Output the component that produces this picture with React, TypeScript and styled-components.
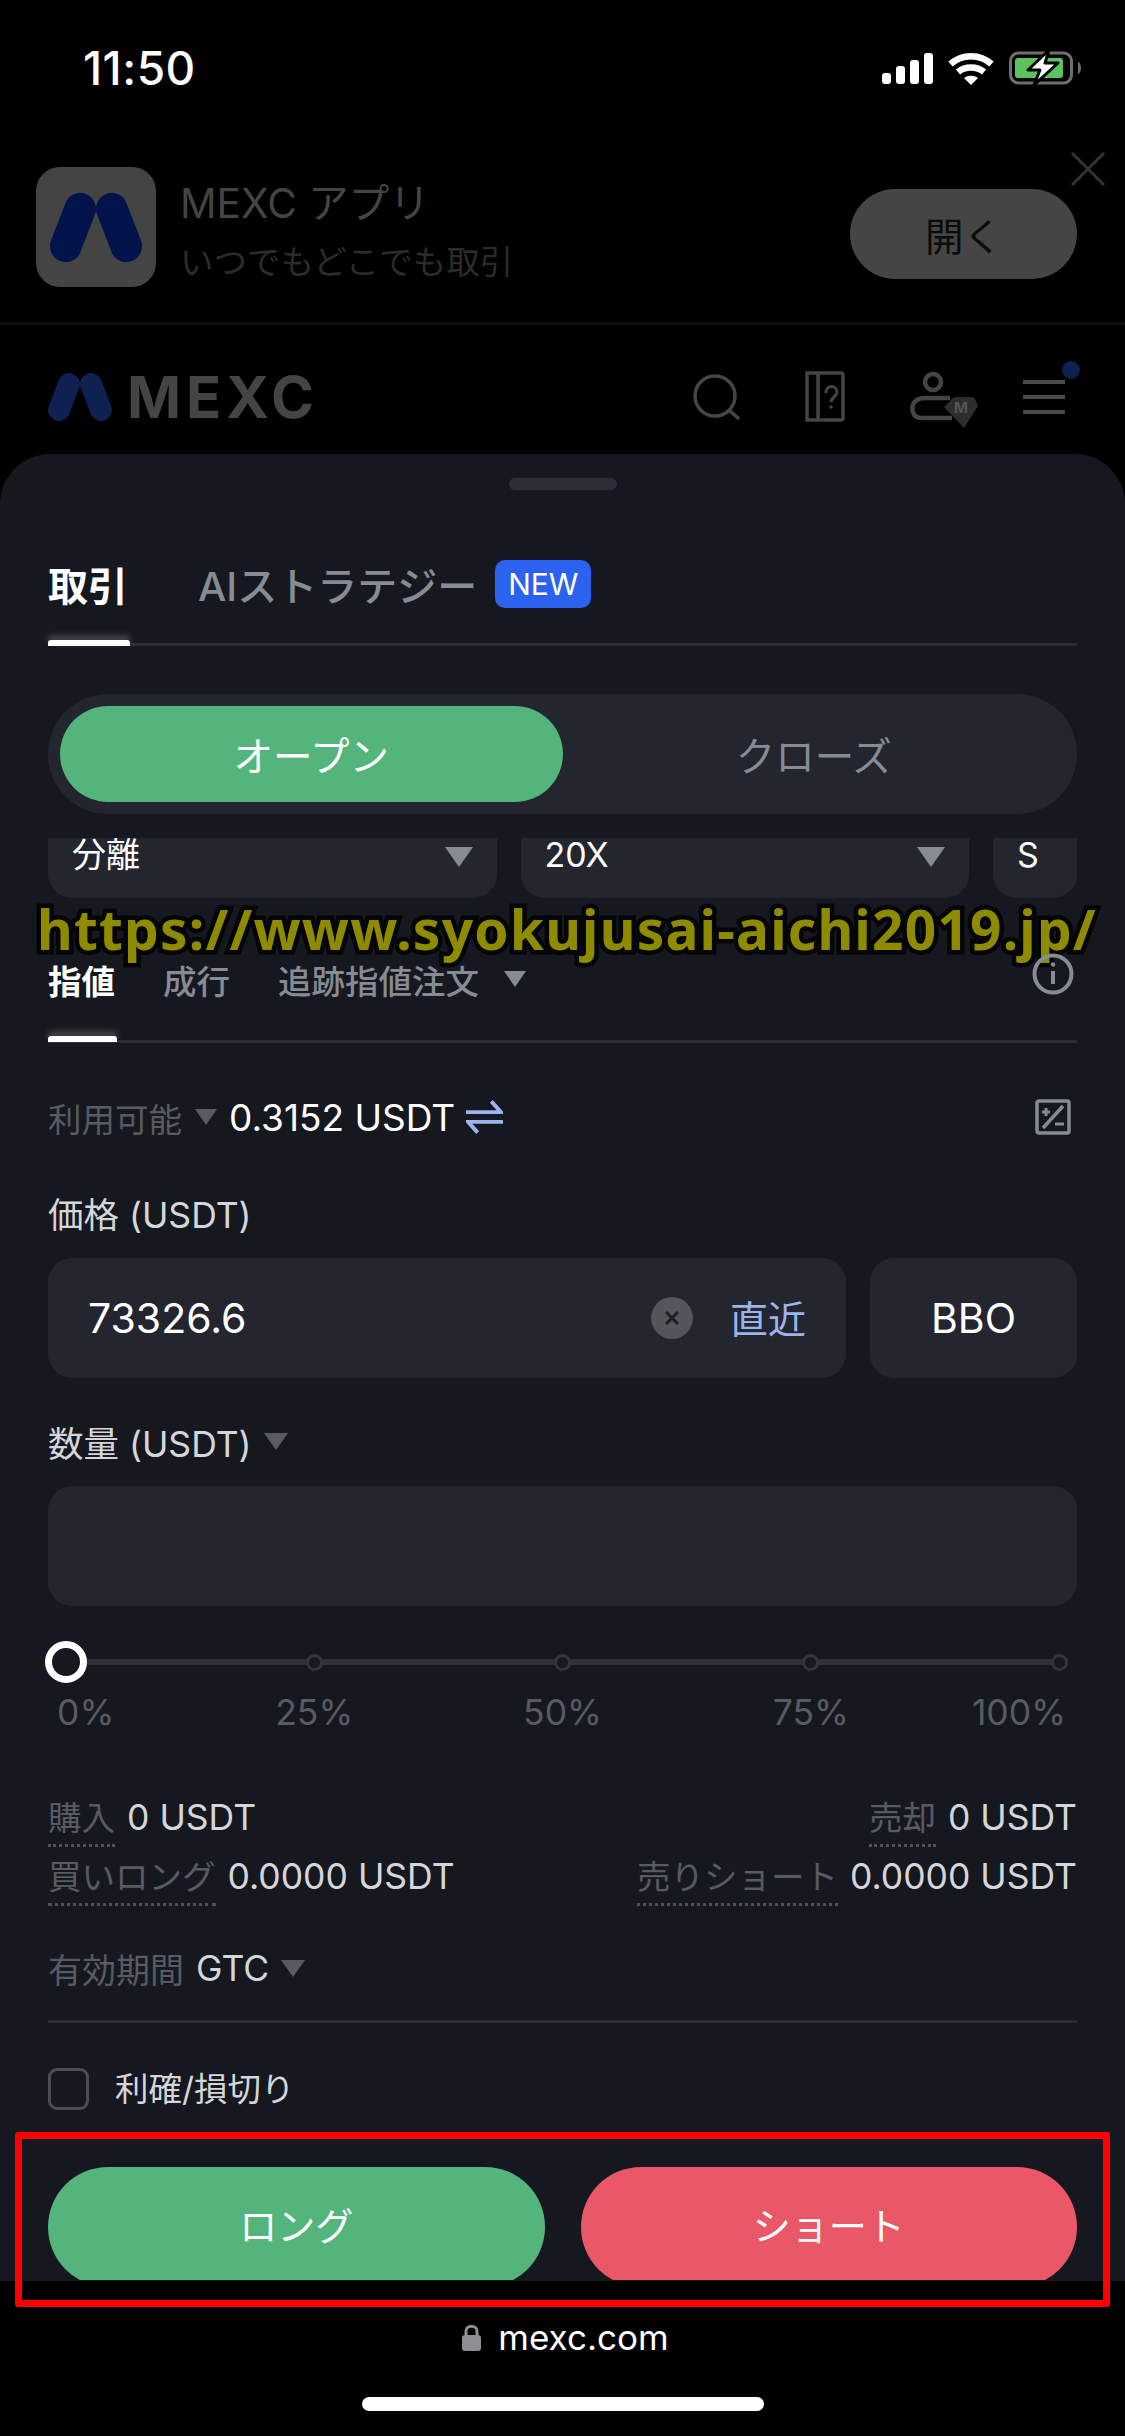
import React from "react";
import styled, { createGlobalStyle } from "styled-components";

const FONT = `Inter, "Noto Sans CJK JP", "Noto Sans", sans-serif`;

const color = {
  sheet: "#16181f",
  field: "#23262f",
  line: "#2a2c36",
  green: "#53b57c",
  red: "#ea5767",
  muted: "#868b94",
  dim: "#585b62",
  soft: "#d5d6d9",
  link: "#9ab5ee",
};

const GlobalStyle = createGlobalStyle`
  html, body {
    margin: 0;
    padding: 0;
    background: #000;
  }
  * {
    box-sizing: border-box;
  }
`;

const Page = styled.div`
  position: relative;
  display: flex;
  flex-direction: column;
  width: 1125px;
  height: 2436px;
  overflow: hidden;
  background: #000;
  color: #fff;
  font-family: ${FONT};
`;

const StatusBar = styled.div`
  display: flex;
  align-items: center;
  justify-content: space-between;
  height: 136px;
  padding: 0 43px 0 83px;
`;

const Time = styled.span`
  font-size: 46px;
  font-weight: 500;
  letter-spacing: 0.5px;
`;

const StatusIcons = styled.div`
  display: flex;
  align-items: center;
  gap: 15px;
`;

const AppBanner = styled.div`
  position: relative;
  display: flex;
  align-items: center;
  height: 189px;
  padding: 6px 48px 0 36px;
  border-bottom: 3px solid #0e0e12;
`;

const AppIcon = styled.div`
  display: flex;
  align-items: center;
  justify-content: center;
  width: 120px;
  height: 120px;
  margin-top: -10px;
  border-radius: 24px;
  background: #444;
`;

const AppText = styled.div`
  display: flex;
  flex: 1;
  flex-direction: column;
  gap: 10px;
  margin-left: 24px;
`;

const AppTitle = styled.span`
  font-size: 40.5px;
  line-height: 50px;
  color: #444;
`;

const AppSubtitle = styled.span`
  font-size: 33.5px;
  line-height: 46px;
  color: #2b2b2b;
`;

const OpenButton = styled.div`
  display: flex;
  align-items: center;
  justify-content: center;
  width: 227px;
  height: 90px;
  margin-top: 3px;
  border-radius: 45px;
  background: #454545;
  color: #0b0b0b;
  font-size: 38.5px;
`;

const CloseMark = styled.svg`
  position: absolute;
  top: 15px;
  right: 19px;
`;

const SiteHeader = styled.div`
  display: flex;
  align-items: center;
  height: 129px;
  padding: 14px 45px 0 48px;
`;

const Logo = styled.div`
  display: flex;
  flex: 1;
  align-items: center;
  gap: 15px;
`;

const LogoText = styled.span`
  font-size: 58px;
  line-height: 48px;
  font-weight: 700;
  letter-spacing: 5px;
  color: #444;
`;

const HeaderIcons = styled.div`
  display: flex;
  align-items: center;
  gap: 65px;
`;

const ProfileSlot = styled.div`
  display: flex;
  margin: 6px -20px 0 0;
`;

const Sheet = styled.div`
  display: flex;
  flex-direction: column;
  height: 1827px;
  padding: 24px 48px 0;
  overflow: hidden;
  border-radius: 50px 50px 0 0;
  background: ${color.sheet};
`;

const Handle = styled.div`
  flex: none;
  align-self: center;
  width: 108px;
  height: 12px;
  border-radius: 6px;
  background: #2b2e38;
`;

const MainTabs = styled.div`
  display: flex;
  flex: none;
  align-items: center;
  gap: 70px;
  height: 156px;
  padding-top: 34px;
  border-bottom: 3px solid ${color.line};
`;

const MainTab = styled.div<{ $active?: boolean }>`
  position: relative;
  display: flex;
  align-items: center;
  gap: 18px;
  font-size: 40px;
  font-weight: ${(p) => (p.$active ? 700 : 500)};
  color: ${(p) => (p.$active ? "#fff" : color.muted)};
`;

const Indicator = styled.span<{ $bottom: number }>`
  position: absolute;
  left: 0;
  right: -2px;
  bottom: ${(p) => p.$bottom}px;
  height: 6px;
  border-radius: 3px 3px 0 0;
  background: #fff;
  box-shadow: 0 -4px 6px rgba(255, 255, 255, 0.25);
`;

const NewBadge = styled.span`
  display: flex;
  align-items: center;
  justify-content: center;
  width: 96px;
  height: 48px;
  border-radius: 10px;
  background: #2b62f0;
  color: #fff;
  font-size: 30px;
  font-weight: 400;
`;

const Segment = styled.div`
  display: flex;
  flex: none;
  height: 120px;
  margin-top: 48px;
  padding: 12px 12px;
  border-radius: 60px;
  background: ${color.field};
`;

const SegmentItem = styled.div<{ $active?: boolean }>`
  display: flex;
  flex: 1;
  align-items: center;
  justify-content: center;
  padding-bottom: 2px;
  border-radius: 48px;
  background: ${(p) => (p.$active ? color.green : "transparent")};
  color: ${(p) => (p.$active ? "#fff" : color.muted)};
  font-size: 39.5px;
`;

const SelectRow = styled.div`
  display: flex;
  flex: none;
  gap: 24px;
  height: 60px;
  margin-top: 24px;
`;

const Select = styled.div<{ $grow?: boolean }>`
  display: flex;
  flex: ${(p) => (p.$grow ? 1 : "none")};
  align-items: flex-start;
  justify-content: space-between;
  width: ${(p) => (p.$grow ? "auto" : "84px")};
  padding: 0 24px;
  border-radius: 0 0 24px 24px;
  background: ${color.field};
  font-size: 34px;
  line-height: 34px;
`;

const Caret = styled.i<{ $size: number; $tone: string }>`
  display: inline-block;
  flex: none;
  width: 0;
  height: 0;
  border-left: ${(p) => p.$size}px solid transparent;
  border-right: ${(p) => p.$size}px solid transparent;
  border-top: ${(p) => Math.round(p.$size * 1.45)}px solid ${(p) => p.$tone};
`;

const SelectCaret = styled(Caret)`
  margin-top: 9px;
`;

const OrderTabs = styled.div`
  display: flex;
  flex: none;
  align-items: center;
  height: 145px;
  padding-top: 20px;
  border-bottom: 3px solid ${color.line};
`;

const OrderTab = styled.div<{ $active?: boolean }>`
  position: relative;
  display: flex;
  align-items: center;
  gap: 25px;
  margin-right: 48px;
  font-size: 33.5px;
  font-weight: ${(p) => (p.$active ? 700 : 500)};
  color: ${(p) => (p.$active ? "#fff" : color.muted)};
`;

const InfoButton = styled.div`
  position: relative;
  z-index: 1;
  margin: -6px 3px 0 auto;
`;

const Watermark = styled.div`
  position: absolute;
  top: 901px;
  left: 37px;
  font-family: "Noto Sans", sans-serif;
  font-size: 55px;
  line-height: 56px;
  font-weight: 700;
  letter-spacing: 1.2px;
  white-space: nowrap;
  color: #8f8b00;
  -webkit-text-stroke: 9px #050505;
  paint-order: stroke fill;
`;

const AvailableRow = styled.div`
  display: flex;
  flex: none;
  align-items: center;
  height: 60px;
  margin-top: 44px;
  font-size: 37px;
`;

const DimLabel = styled.span`
  margin-right: 13px;
  color: ${color.dim};
  font-size: 33.5px;
`;

const AvailableCaret = styled(Caret)`
  margin-right: 12px;
`;

const RowIcon = styled.div`
  display: flex;
  margin-left: 11px;
`;

const RowEnd = styled.div`
  display: flex;
  margin-left: auto;
  margin-right: 6px;
`;

const FieldLabel = styled.div<{ $top: number }>`
  display: flex;
  flex: none;
  align-items: center;
  gap: 12px;
  height: 52px;
  margin-top: ${(p) => p.$top}px;
  font-size: 35.5px;
  color: ${color.soft};
`;

const PriceRow = styled.div`
  display: flex;
  flex: none;
  gap: 24px;
  margin-top: 20px;
`;

const Field = styled.div`
  display: flex;
  flex: 1;
  align-items: center;
  height: 120px;
  padding: 0 40px;
  border-radius: 24px;
  background: ${color.field};
`;

const AmountField = styled(Field)`
  flex: none;
  margin-top: 19px;
`;

const PriceValue = styled.span`
  flex: 1;
  font-size: 41px;
`;

const ClearButton = styled.div`
  display: flex;
  align-items: center;
  justify-content: center;
  width: 42px;
  height: 42px;
  margin-right: 37px;
  border-radius: 50%;
  background: #54565c;
`;

const LatestLink = styled.span`
  margin-bottom: 3px;
  font-size: 38px;
  color: ${color.link};
`;

const BboButton = styled.div`
  display: flex;
  align-items: center;
  justify-content: center;
  width: 207px;
  height: 120px;
  border-radius: 24px;
  background: ${color.field};
  font-size: 41px;
`;

const Slider = styled.div`
  position: relative;
  display: flex;
  flex: none;
  justify-content: space-between;
  height: 44px;
  margin: 34px -3px 0;
  &::before {
    content: "";
    position: absolute;
    top: 19px;
    left: 21px;
    right: 12px;
    height: 6px;
    background: #2f303c;
  }
`;

const SliderStop = styled.div`
  position: relative;
  display: flex;
  align-items: center;
  justify-content: center;
  width: 42px;
  height: 44px;
`;

const SliderDot = styled.span`
  width: 17px;
  height: 17px;
  border: 3px solid #33343f;
  border-radius: 50%;
  background: ${color.sheet};
`;

const SliderThumb = styled.span`
  width: 42px;
  height: 42px;
  border: 7px solid #fff;
  border-radius: 50%;
  background: ${color.sheet};
`;

const SliderLabels = styled.div`
  display: flex;
  flex: none;
  justify-content: space-between;
  height: 46px;
  margin: 6px -3px 0;
  font-size: 35.5px;
  line-height: 46px;
  color: ${color.dim};
`;

const SliderLabel = styled.span`
  display: flex;
  justify-content: center;
  width: 42px;
  white-space: nowrap;
  &:first-child {
    justify-content: flex-start;
    padding-left: 12px;
  }
  &:last-child {
    justify-content: flex-end;
    padding-right: 14px;
  }
`;

const SummaryGrid = styled.div`
  display: grid;
  flex: none;
  grid-template-columns: auto auto;
  grid-auto-rows: 59px;
  justify-content: space-between;
  margin-top: 56px;
`;

const SummaryCell = styled.div<{ $end?: boolean }>`
  display: flex;
  align-items: flex-start;
  justify-content: ${(p) => (p.$end ? "flex-end" : "flex-start")};
  gap: 12px;
  font-size: 35.5px;
  line-height: 52px;
  color: ${color.soft};
`;

const SummaryLabel = styled.span`
  border-bottom: 3px dotted #50535b;
  color: ${color.dim};
  font-size: 33.5px;
`;

const ValidityRow = styled.div`
  display: flex;
  flex: none;
  align-items: center;
  gap: 12px;
  height: 52px;
  margin-top: 32px;
  font-size: 35.5px;
  color: ${color.soft};
`;

const MutedLabel = styled.span`
  color: ${color.dim};
  font-size: 34px;
`;

const Divider = styled.div`
  flex: none;
  height: 3px;
  margin-top: 26px;
  background: ${color.line};
`;

const CheckRow = styled.div`
  display: flex;
  flex: none;
  align-items: center;
  gap: 26px;
  height: 52px;
  margin-top: 40px;
  font-size: 33.5px;
  color: ${color.soft};
`;

const CheckBox = styled.span`
  width: 41px;
  height: 42px;
  border: 3px solid #4b4d55;
  border-radius: 9px;
`;

const CheckLabel = styled.span`
  margin-bottom: 5px;
`;

const ActionBar = styled.div`
  display: flex;
  flex: none;
  gap: 36px;
  height: 113px;
  margin-top: 52px;
  overflow: hidden;
`;

const ActionButton = styled.div<{ $tone: string }>`
  display: flex;
  flex: 1;
  flex-shrink: 0;
  align-items: center;
  justify-content: center;
  height: 120px;
  padding-bottom: 7px;
  border-radius: 60px;
  background: ${(p) => p.$tone};
  font-size: 38px;
`;

const RedFrame = styled.div`
  position: absolute;
  top: 2132px;
  left: 15px;
  width: 1095px;
  height: 175px;
  border: 7px solid #f00;
  border-radius: 3px;
`;

const BrowserBar = styled.div`
  display: flex;
  flex: 1;
  flex-direction: column;
  align-items: center;
`;

const AddressBar = styled.div`
  display: flex;
  align-items: center;
  gap: 17px;
  height: 60px;
  margin: 26px 0 0 6px;
  font-size: 35px;
`;

const HomeIndicator = styled.div`
  width: 402px;
  height: 14px;
  margin-top: 30px;
  border-radius: 7px;
  background: #fff;
`;

const Signal = () => (
  <svg width="51" height="31" viewBox="0 0 51 31" fill="#fff">
    <rect x="0" y="20" width="9" height="11" rx="3" />
    <rect x="14" y="13" width="9" height="18" rx="3" />
    <rect x="28" y="7" width="9" height="24" rx="3" />
    <rect x="42" y="0" width="9" height="31" rx="3" />
  </svg>
);

const Wifi = () => (
  <svg width="46" height="33" viewBox="0 0 46 33" fill="none" stroke="#fff" strokeWidth="6.5">
    <path d="M2.5 12 C14 1.5 32 1.5 43.5 12" />
    <path d="M10 20 C17 14 29 14 36 20" />
    <path d="M23 33 L16 26 C20 23 26 23 30 26 Z" fill="#fff" stroke="none" />
  </svg>
);

const Battery = () => (
  <svg width="73" height="36" viewBox="0 0 73 36" fill="none">
    <rect x="1.5" y="3" width="61" height="30" rx="8" stroke="#6e6e6e" strokeWidth="3" />
    <rect x="6" y="8" width="48" height="20" rx="3" fill="#5ac35f" />
    <path d="M69 12 C73 13 73 23 69 24 Z" fill="#6e6e6e" />
    <path d="M40 0 L19 20 H31 L25 35 L49 13 H36 Z" fill="#fff" stroke="#000" strokeWidth="3" strokeLinejoin="round" />
  </svg>
);

const Close = () => (
  <CloseMark width="36" height="36" viewBox="0 0 36 36" stroke="#333" strokeWidth="3" fill="none">
    <path d="M2 2 L34 34 M34 2 L2 34" />
  </CloseMark>
);

const BrandMark = ({ width, height, tone }: { width: number; height: number; tone: string }) => (
  <svg width={width} height={height} viewBox="0 0 64 48" fill="none" stroke={tone} strokeWidth="22" strokeLinecap="round">
    <path d="M21 11 L11 37" />
    <path d="M43 11 L53 37" />
  </svg>
);

const SearchIcon = () => (
  <svg width="47" height="46" viewBox="0 0 47 46" fill="none" stroke="#454545" strokeWidth="3.5">
    <circle cx="22" cy="22" r="20" />
    <path d="M36 36 L46 45" />
  </svg>
);

const GuideIcon = () => (
  <svg width="40" height="51" viewBox="0 0 40 51" fill="none" stroke="#454545" strokeWidth="3.5">
    <path d="M2 2 H36 Q38 2 38 4 V47 Q38 49 36 49 H2 Z" />
    <path d="M13 2 V49" />
    <path d="M21 22 C21 13 32 14 32 21 C32 26 26 26 26 31" strokeWidth="3" />
    <circle cx="26" cy="36" r="1.8" fill="#454545" stroke="none" />
  </svg>
);

const ProfileIcon = () => (
  <svg width="68" height="58" viewBox="0 0 68 58" fill="none">
    <circle cx="23" cy="11" r="8" stroke="#454545" strokeWidth="4.5" />
    <path d="M40 27 H16 C4 27 1 34 3 41 C4 46 8 47 12 47 H42" stroke="#454545" strokeWidth="4.5" />
    <path d="M42 28 Q44 26 46 26 H62 Q64 26 65 28 L68 35 L54 57 L34 36 Z" fill="#2d2d2f" />
    <text x="51" y="42" textAnchor="middle" fontSize="15" fontWeight="700" fill="#555" fontFamily="Inter, sans-serif">M</text>
  </svg>
);

const MenuIcon = () => (
  <svg width="57" height="72" viewBox="0 0 57 72" fill="none">
    <path d="M0 21 H42 M0 36 H42 M0 51 H42" stroke="#4a4a4a" strokeWidth="4" />
    <circle cx="48" cy="9" r="9" fill="#0f2150" />
  </svg>
);

const InfoIcon = () => (
  <svg width="42" height="42" viewBox="0 0 42 42" fill="none" stroke={color.muted} strokeWidth="4">
    <circle cx="21" cy="21" r="18.5" />
    <path d="M21 18 V31" />
    <circle cx="21" cy="11.5" r="2.2" fill={color.muted} stroke="none" />
  </svg>
);

const SwapIcon = () => (
  <svg width="37" height="36" viewBox="0 0 38 36" fill="none" stroke={color.link} strokeWidth="4">
    <path d="M0 13 H36 L26 2" />
    <path d="M38 23 H2 L12 34" />
  </svg>
);

const CalcIcon = () => (
  <svg width="36" height="36" viewBox="0 0 36 36" fill="none" stroke={color.muted} strokeWidth="3.5">
    <rect x="2" y="2" width="32" height="32" rx="2" />
    <path d="M28 7 L8 29" />
    <path d="M7 13 H15 M11 9 V17 M20 25 H29" strokeWidth="3" />
  </svg>
);

const ClearIcon = () => (
  <svg width="16" height="16" viewBox="0 0 16 16" stroke="#1c1e25" strokeWidth="3" fill="none">
    <path d="M2 2 L14 14 M14 2 L2 14" />
  </svg>
);

const LockIcon = () => (
  <svg width="19" height="27" viewBox="0 0 19 27" fill="#8e8e93">
    <path d="M4 12 V7 C4 0.5 15 0.5 15 7 V12" fill="none" stroke="#8e8e93" strokeWidth="3" />
    <rect x="0" y="11" width="19" height="16" rx="3" />
  </svg>
);

const SLIDER_STOPS = ["0%", "25%", "50%", "75%", "100%"];

const App = () => {
  return (
    <Page>
      <GlobalStyle />
      <StatusBar>
        <Time>11:50</Time>
        <StatusIcons>
          <Signal />
          <Wifi />
          <Battery />
        </StatusIcons>
      </StatusBar>

      <AppBanner>
        <AppIcon>
          <BrandMark width={92} height={69} tone="#02124a" />
        </AppIcon>
        <AppText>
          <AppTitle>MEXC アプリ</AppTitle>
          <AppSubtitle>いつでもどこでも取引</AppSubtitle>
        </AppText>
        <OpenButton>開く</OpenButton>
        <Close />
      </AppBanner>

      <SiteHeader>
        <Logo>
          <BrandMark width={64} height={48} tone="#0f2150" />
          <LogoText>MEXC</LogoText>
        </Logo>
        <HeaderIcons>
          <SearchIcon />
          <GuideIcon />
          <ProfileSlot>
            <ProfileIcon />
          </ProfileSlot>
          <MenuIcon />
        </HeaderIcons>
      </SiteHeader>

      <Sheet>
        <Handle />
        <MainTabs>
          <MainTab $active>
            取引
            <Indicator $bottom={-33} />
          </MainTab>
          <MainTab>
            AIストラテジー
            <NewBadge>NEW</NewBadge>
          </MainTab>
        </MainTabs>

        <Segment>
          <SegmentItem $active>オープン</SegmentItem>
          <SegmentItem>クローズ</SegmentItem>
        </Segment>

        <SelectRow>
          <Select $grow>
            分離
            <SelectCaret $size={14} $tone={color.muted} />
          </Select>
          <Select $grow>
            20X
            <SelectCaret $size={14} $tone={color.muted} />
          </Select>
          <Select>S</Select>
        </SelectRow>

        <OrderTabs>
          <OrderTab $active>
            指値
            <Indicator $bottom={-38} />
          </OrderTab>
          <OrderTab>成行</OrderTab>
          <OrderTab>
            追跡指値注文
            <Caret $size={11} $tone={color.muted} />
          </OrderTab>
          <InfoButton>
            <InfoIcon />
          </InfoButton>
        </OrderTabs>

        <AvailableRow>
          <DimLabel>利用可能</DimLabel>
          <AvailableCaret $size={11} $tone={color.dim} />
          0.3152 USDT
          <RowIcon>
            <SwapIcon />
          </RowIcon>
          <RowEnd>
            <CalcIcon />
          </RowEnd>
        </AvailableRow>

        <FieldLabel $top={39}>価格 (USDT)</FieldLabel>
        <PriceRow>
          <Field>
            <PriceValue>73326.6</PriceValue>
            <ClearButton>
              <ClearIcon />
            </ClearButton>
            <LatestLink>直近</LatestLink>
          </Field>
          <BboButton>BBO</BboButton>
        </PriceRow>

        <FieldLabel $top={37}>
          数量 (USDT)
          <Caret $size={12} $tone={color.dim} />
        </FieldLabel>
        <AmountField />

        <Slider>
          {SLIDER_STOPS.map((stop, index) => (
            <SliderStop key={stop}>{index === 0 ? <SliderThumb /> : <SliderDot />}</SliderStop>
          ))}
        </Slider>
        <SliderLabels>
          {SLIDER_STOPS.map((stop) => (
            <SliderLabel key={stop}>{stop}</SliderLabel>
          ))}
        </SliderLabels>

        <SummaryGrid>
          <SummaryCell>
            <SummaryLabel>購入</SummaryLabel>0 USDT
          </SummaryCell>
          <SummaryCell $end>
            <SummaryLabel>売却</SummaryLabel>0 USDT
          </SummaryCell>
          <SummaryCell>
            <SummaryLabel>買いロング</SummaryLabel>0.0000 USDT
          </SummaryCell>
          <SummaryCell $end>
            <SummaryLabel>売りショート</SummaryLabel>0.0000 USDT
          </SummaryCell>
        </SummaryGrid>

        <ValidityRow>
          <MutedLabel>有効期間</MutedLabel>
          GTC
          <Caret $size={12} $tone={color.dim} />
        </ValidityRow>

        <Divider />

        <CheckRow>
          <CheckBox />
          <CheckLabel>利確/損切り</CheckLabel>
        </CheckRow>

        <ActionBar>
          <ActionButton $tone={color.green}>ロング</ActionButton>
          <ActionButton $tone={color.red}>ショート</ActionButton>
        </ActionBar>
      </Sheet>

      <BrowserBar>
        <AddressBar>
          <LockIcon />
          mexc.com
        </AddressBar>
        <HomeIndicator />
      </BrowserBar>

      <Watermark>https://www.syokujusai-aichi2019.jp/</Watermark>
      <RedFrame />
    </Page>
  );
};

export default App;
